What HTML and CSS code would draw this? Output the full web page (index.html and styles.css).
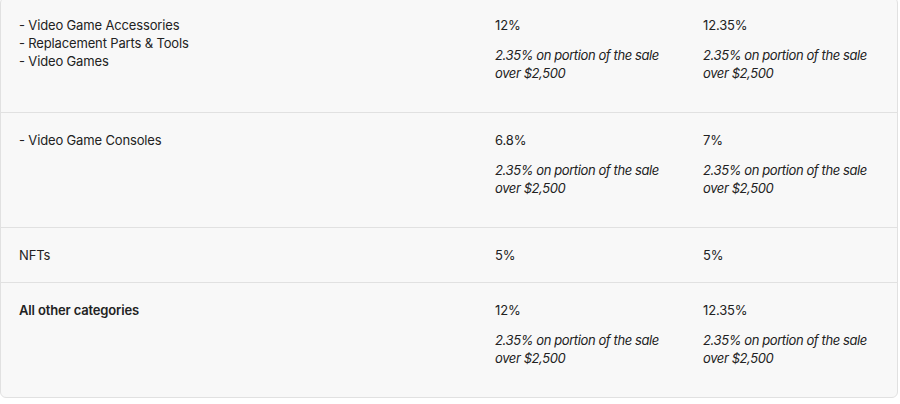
FILE: index.html
```html
<!DOCTYPE html>
<html lang="en">
<head>
<meta charset="utf-8">
<title>Fees</title>
<link rel="stylesheet" href="styles.css">
</head>
<body>
<div class="card">
  <div class="row">
    <div class="cell cat">
      <div class="line">- Video Game Accessories</div>
      <div class="line">- Replacement Parts &amp; Tools</div>
      <div class="line">- Video Games</div>
    </div>
    <div class="cell">
      <div class="line">12%</div>
      <p class="note">2.35% on portion of the sale<br>over $2,500</p>
    </div>
    <div class="cell">
      <div class="line">12.35%</div>
      <p class="note">2.35% on portion of the sale<br>over $2,500</p>
    </div>
  </div>
  <div class="row">
    <div class="cell cat">
      <div class="line">- Video Game Consoles</div>
    </div>
    <div class="cell">
      <div class="line">6.8%</div>
      <p class="note">2.35% on portion of the sale<br>over $2,500</p>
    </div>
    <div class="cell">
      <div class="line">7%</div>
      <p class="note">2.35% on portion of the sale<br>over $2,500</p>
    </div>
  </div>
  <div class="row">
    <div class="cell cat">
      <div class="line">NFTs</div>
    </div>
    <div class="cell">
      <div class="line">5%</div>
    </div>
    <div class="cell">
      <div class="line">5%</div>
    </div>
  </div>
  <div class="row">
    <div class="cell cat">
      <div class="line bold">All other categories</div>
    </div>
    <div class="cell">
      <div class="line">12%</div>
      <p class="note">2.35% on portion of the sale<br>over $2,500</p>
    </div>
    <div class="cell">
      <div class="line">12.35%</div>
      <p class="note">2.35% on portion of the sale<br>over $2,500</p>
    </div>
  </div>
</div>
</body>
</html>
```

FILE: styles.css
```css
html, body {
  margin: 0;
  padding: 0;
  background: #ffffff;
}
body {
  font-family: "Inter", "Liberation Sans", sans-serif;
  font-size: 13px;
  line-height: 18px;
  letter-spacing: -0.15px;
  color: #222222;
}
.card {
  margin: -3px 2px 0 0;
  background: #f8f8f8;
  border: 1px solid #e1e1e1;
  border-radius: 6px;
  overflow: hidden;
}
.row {
  display: grid;
  grid-template-columns: 476px 208px 1fr;
  border-top: 1px solid #e1e1e1;
}
.row:first-child {
  border-top: none;
}
.cell {
  padding: 18px;
}
.line {
  margin: 0;
}
.bold {
  font-weight: 600;
}
.note {
  margin: 12px 0;
  font-style: italic;
  white-space: nowrap;
  letter-spacing: -0.4px;
}
```
